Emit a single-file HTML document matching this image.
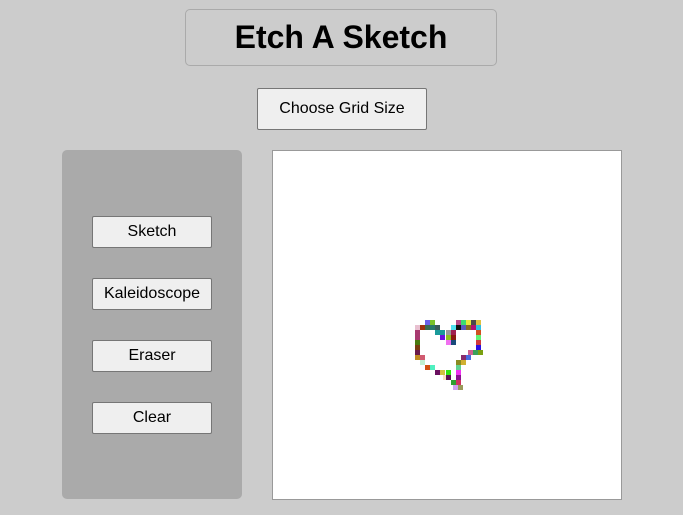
<!DOCTYPE html>
<html><head><meta charset="utf-8"><style>
html,body{margin:0;padding:0;}
body{width:683px;height:515px;background:#cccccc;position:relative;overflow:hidden;font-family:"Liberation Sans",Arial,sans-serif;}
.title{position:absolute;left:185px;top:9px;width:312px;height:57px;border:1px solid #aaa;border-radius:5px;box-sizing:border-box;display:flex;align-items:center;justify-content:center;font-weight:bold;font-size:32px;color:#000;}
.btn{position:absolute;background:#efefef;border:1px solid #767676;border-radius:2px;box-sizing:border-box;display:flex;align-items:center;justify-content:center;font-size:16px;color:#000;}
.panel{position:absolute;left:62px;top:150px;width:180px;height:349px;background:#aaaaaa;border-radius:5px;}
.board{position:absolute;left:272px;top:150px;width:350px;height:350px;background:#fff;border:1px solid #999;box-sizing:border-box;}
.c{position:absolute;width:5px;height:5px;}
</style></head><body>
<div class="title">Etch A Sketch</div>
<div class="btn" style="left:257px;top:88px;width:170px;height:42px;">Choose Grid Size</div>
<div class="panel"></div>
<div class="btn" style="left:92px;top:216px;width:120px;height:32px;">Sketch</div>
<div class="btn" style="left:92px;top:278px;width:120px;height:32px;">Kaleidoscope</div>
<div class="btn" style="left:92px;top:340px;width:120px;height:32px;">Eraser</div>
<div class="btn" style="left:92px;top:402px;width:120px;height:32px;">Clear</div>
<div class="board"></div>
<div id="h"></div>
<script>
var cells=[
[425,320,'#6b5ee8'],[430,320,'#7bc32a'],[456,320,'#b44a8a'],[461,320,'#3cdc70'],[466,320,'#e8e83a'],[471,320,'#4a4a4a'],[476,320,'#e0c040'],
[415,325,'#e8c0d0'],[420,325,'#a03010'],[425,325,'#3a6a50'],[430,325,'#2a7a6a'],[435,325,'#3a5a5a'],[451,325,'#50e0f0'],[456,325,'#101010'],[461,325,'#5a5ac0'],[466,325,'#8a6a20'],[471,325,'#b01070'],[476,325,'#30c0e0'],
[415,330,'#a83a70'],[435,330,'#1a9a9a'],[440,330,'#1a9a9a'],[446,330,'#9a9a9a'],[451,330,'#a02050'],[476,330,'#d05020'],
[415,335,'#a83a70'],[440,335,'#6a10e0'],[446,335,'#90c020'],[451,335,'#8a1a10'],[476,335,'#60f070'],
[415,340,'#4a7a10'],[446,340,'#f070f0'],[451,340,'#1a4a7a'],[476,340,'#d03a3a'],
[415,345,'#7a3a10'],[476,345,'#2a10e0'],
[415,350,'#6a1a4a'],[468,350,'#d06090'],[473,350,'#3aa05a'],[478,350,'#7aa010'],
[415,355,'#c08a20'],[420,355,'#d05a70'],[461,355,'#8a2a6a'],[466,355,'#4a6ae0'],
[420,360,'#c0f0d0'],[456,360,'#8a8a20'],[461,360,'#d0b030'],
[425,365,'#d05010'],[430,365,'#50f0c0'],[456,365,'#60d090'],
[435,370,'#6a1060'],[440,370,'#d0c040'],[446,370,'#30e010'],[456,370,'#f030f0'],
[443,375,'#f8e0c0'],[446,375,'#5a1050'],[456,375,'#8a1090'],
[451,380,'#30a030'],[456,380,'#d03060'],
[453,385,'#d0a0f0'],[458,385,'#9a9a5a']];
var h='';cells.forEach(function(c){h+='<div class="c" style="left:'+c[0]+'px;top:'+c[1]+'px;background:'+c[2]+'"></div>';});
document.getElementById('h').innerHTML=h;
</script>
</body></html>
